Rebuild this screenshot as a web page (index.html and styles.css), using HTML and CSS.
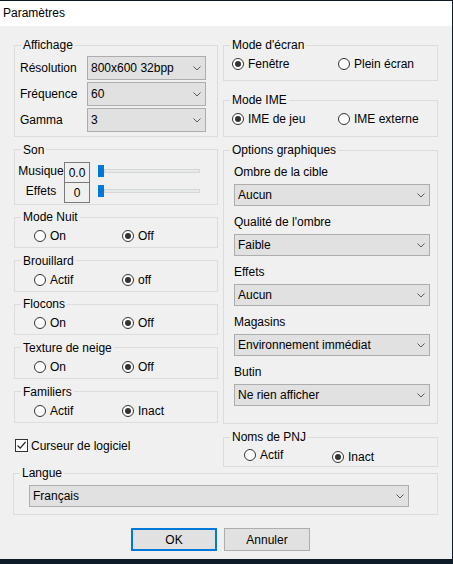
FILE: index.html
```html
<!DOCTYPE html>
<html lang="fr">
<head>
<meta charset="utf-8">
<title>Paramètres</title>
<link rel="stylesheet" href="styles.css">
</head>
<body>
<div class="window">
  <div class="titlebar">Paramètres</div>
  <div class="content">
    <div class="columns">
      <div class="col col-left">
        <fieldset class="group">
          <legend>Affichage</legend>
          <div class="display-grid">
            <span class="lbl">Résolution</span>
            <div class="combo h24"><span>800x600 32bpp</span><svg class="arrow" width="8" height="5" viewBox="0 0 8 5"><path d="M0.5 0.5 L4 4 L7.5 0.5" fill="none" stroke="#5a5a5a"/></svg></div>
            <span class="lbl">Fréquence</span>
            <div class="combo h24"><span>60</span><svg class="arrow" width="8" height="5" viewBox="0 0 8 5"><path d="M0.5 0.5 L4 4 L7.5 0.5" fill="none" stroke="#5a5a5a"/></svg></div>
            <span class="lbl">Gamma</span>
            <div class="combo h24"><span>3</span><svg class="arrow" width="8" height="5" viewBox="0 0 8 5"><path d="M0.5 0.5 L4 4 L7.5 0.5" fill="none" stroke="#5a5a5a"/></svg></div>
          </div>
        </fieldset>

        <fieldset class="group">
          <legend>Son</legend>
          <div class="sound">
            <div class="snd-row">
              <span class="snd-lbl">Musique</span>
              <span class="num">0.0</span>
              <div class="slider"><span class="thumb"></span><span class="track"></span></div>
            </div>
            <div class="snd-row">
              <span class="snd-lbl">Effets</span>
              <span class="num">0</span>
              <div class="slider"><span class="thumb"></span><span class="track"></span></div>
            </div>
          </div>
        </fieldset>

        <fieldset class="group">
          <legend>Mode Nuit</legend>
          <div class="radios">
            <label class="radio"><span class="rb"></span>On</label>
            <label class="radio"><span class="rb on"></span>Off</label>
          </div>
        </fieldset>

        <fieldset class="group">
          <legend>Brouillard</legend>
          <div class="radios">
            <label class="radio"><span class="rb"></span>Actif</label>
            <label class="radio"><span class="rb on"></span>off</label>
          </div>
        </fieldset>

        <fieldset class="group">
          <legend>Flocons</legend>
          <div class="radios">
            <label class="radio"><span class="rb"></span>On</label>
            <label class="radio"><span class="rb on"></span>Off</label>
          </div>
        </fieldset>

        <fieldset class="group">
          <legend>Texture de neige</legend>
          <div class="radios">
            <label class="radio"><span class="rb"></span>On</label>
            <label class="radio"><span class="rb on"></span>Off</label>
          </div>
        </fieldset>

        <fieldset class="group">
          <legend>Familiers</legend>
          <div class="radios">
            <label class="radio"><span class="rb"></span>Actif</label>
            <label class="radio"><span class="rb on"></span>Inact</label>
          </div>
        </fieldset>
      </div>

      <div class="col col-right">
        <fieldset class="group g-screen">
          <legend>Mode d'écran</legend>
          <div class="radios">
            <label class="radio"><span class="rb on"></span>Fenêtre</label>
            <label class="radio"><span class="rb"></span>Plein écran</label>
          </div>
        </fieldset>

        <fieldset class="group g-ime">
          <legend>Mode IME</legend>
          <div class="radios">
            <label class="radio"><span class="rb on"></span>IME de jeu</label>
            <label class="radio"><span class="rb"></span>IME externe</label>
          </div>
        </fieldset>

        <fieldset class="group g-opts">
          <legend>Options graphiques</legend>
          <div class="opts">
            <div class="opt">
              <span class="opt-lbl">Ombre de la cible</span>
              <div class="combo h22"><span>Aucun</span><svg class="arrow" width="8" height="5" viewBox="0 0 8 5"><path d="M0.5 0.5 L4 4 L7.5 0.5" fill="none" stroke="#5a5a5a"/></svg></div>
            </div>
            <div class="opt">
              <span class="opt-lbl">Qualité de l'ombre</span>
              <div class="combo h22"><span>Faible</span><svg class="arrow" width="8" height="5" viewBox="0 0 8 5"><path d="M0.5 0.5 L4 4 L7.5 0.5" fill="none" stroke="#5a5a5a"/></svg></div>
            </div>
            <div class="opt">
              <span class="opt-lbl">Effets</span>
              <div class="combo h22"><span>Aucun</span><svg class="arrow" width="8" height="5" viewBox="0 0 8 5"><path d="M0.5 0.5 L4 4 L7.5 0.5" fill="none" stroke="#5a5a5a"/></svg></div>
            </div>
            <div class="opt">
              <span class="opt-lbl">Magasins</span>
              <div class="combo h22"><span>Environnement immédiat</span><svg class="arrow" width="8" height="5" viewBox="0 0 8 5"><path d="M0.5 0.5 L4 4 L7.5 0.5" fill="none" stroke="#5a5a5a"/></svg></div>
            </div>
            <div class="opt">
              <span class="opt-lbl">Butin</span>
              <div class="combo h22"><span>Ne rien afficher</span><svg class="arrow" width="8" height="5" viewBox="0 0 8 5"><path d="M0.5 0.5 L4 4 L7.5 0.5" fill="none" stroke="#5a5a5a"/></svg></div>
            </div>
          </div>
        </fieldset>
      </div>
    </div>

    <div class="bottom-row">
      <label class="check"><span class="cb"><svg width="11" height="11" viewBox="0 0 11 11"><path d="M1.5 5.5 L4.2 8.2 L9.5 2" fill="none" stroke="#222" stroke-width="1.2"/></svg></span>Curseur de logiciel</label>
      <fieldset class="group g-pnj">
        <legend>Noms de PNJ</legend>
        <div class="radios">
          <label class="radio"><span class="rb"></span>Actif</label>
          <label class="radio low"><span class="rb on"></span>Inact</label>
        </div>
      </fieldset>
    </div>

    <fieldset class="group g-lang">
      <legend>Langue</legend>
      <div class="lang-body">
        <div class="combo lang"><span>Français</span><svg class="arrow" width="8" height="5" viewBox="0 0 8 5"><path d="M0.5 0.5 L4 4 L7.5 0.5" fill="none" stroke="#5a5a5a"/></svg></div>
      </div>
    </fieldset>

    <div class="buttons">
      <div class="btn default">OK</div>
      <div class="btn">Annuler</div>
    </div>
  </div>
</div>
</body>
</html>
```

FILE: styles.css
```css
* { box-sizing: border-box; }

html, body {
  margin: 0;
  padding: 0;
}

body {
  background: #0e1b29;
  padding-top: 1px;
  height: 564px;
  overflow: hidden;
  font-family: "Liberation Sans", Arial, sans-serif;
  font-size: 12px;
  color: #000;
}

.window {
  width: 452px;
  height: 558px;
  background: #f0f0f0;
}

.titlebar {
  height: 25px;
  line-height: 25px;
  background: #fff;
  padding-left: 3px;
  font-size: 12px;
}

.content {
  padding: 12px 0 0 14px;
}

.columns,
.bottom-row {
  display: grid;
  grid-template-columns: 204px 215px;
  column-gap: 5px;
  align-items: start;
}

.col {
  display: flex;
  flex-direction: column;
}

.col-left { gap: 5.6px; }

.group {
  margin: 0;
  padding: 0;
  min-width: 0;
  border: 1px solid #dcdcdc;
}

.group legend {
  margin-left: 6px;
  padding: 0 2px;
  height: 14px;
  line-height: 14px;
  font-size: 12px;
}

/* Affichage */
.display-grid {
  display: grid;
  grid-template-columns: 67px 119px;
  row-gap: 2px;
  align-items: center;
  padding: 4px 11px 4px 5px;
}

.combo {
  display: flex;
  align-items: center;
  justify-content: space-between;
  background: #e1e1e1;
  border: 1px solid #adadad;
  padding: 0 4px 0 3px;
  white-space: nowrap;
}

.combo.h24 { height: 24px; }
.combo.h22 { height: 22px; }

.arrow { flex: none; display: block; }

/* Son */
.sound {
  padding: 5px 0 1px 3px;
}

.snd-row {
  display: flex;
  align-items: center;
}

.snd-row + .snd-row { margin-top: -1px; }

.snd-lbl {
  width: 46px;
  text-align: center;
  margin-top: -3px;
}

.num {
  width: 26px;
  height: 21px;
  border: 1px solid #7a7a7a;
  display: flex;
  align-items: center;
  justify-content: center;
  padding-top: 1px;
  margin-right: 8px;
}

.slider {
  width: 102px;
  height: 12px;
  display: flex;
  align-items: center;
  margin-top: -3px;
}

.thumb {
  flex: none;
  width: 6px;
  height: 12px;
  background: #0078d7;
}

.track {
  flex: 1;
  height: 4px;
  background: #e7eaea;
  border: 1px solid #d6d6d6;
}

/* Radios */
.radios {
  display: grid;
  grid-template-columns: 88px auto;
  padding: 5px 0 4px 19px;
}

.g-screen .radios {
  grid-template-columns: 106px auto;
  padding: 5px 0 9px 8px;
}

.g-ime { margin-top: 12px; }

.g-ime .radios {
  grid-template-columns: 106px auto;
  padding: 5px 0 10px 8px;
}

.g-opts { margin-top: 6px; }

.g-pnj .radios {
  align-items: start;
  padding: 4px 0 2px 20px;
}

.radio {
  display: flex;
  align-items: center;
  height: 14px;
  white-space: nowrap;
}

.radio.low { margin-top: 2px; }

.rb {
  flex: none;
  width: 12px;
  height: 12px;
  border: 1px solid #333;
  border-radius: 50%;
  background: #fff;
  margin-right: 4px;
  display: grid;
  place-items: center;
}

.rb.on::after {
  content: "";
  width: 6px;
  height: 6px;
  border-radius: 50%;
  background: #333;
}

/* Options graphiques */
.opts {
  display: flex;
  flex-direction: column;
  gap: 8px;
  padding: 7px 7px 17px 10px;
}

.opt-lbl {
  display: block;
  height: 16px;
  line-height: 16px;
  margin-bottom: 4px;
}

/* Bottom */
.bottom-row { margin-top: 6px; }

.check {
  display: flex;
  align-items: center;
  height: 13px;
  margin: 9px 0 0 1px;
}

.cb {
  flex: none;
  width: 13px;
  height: 13px;
  border: 1px solid #333;
  background: #fff;
  margin-right: 3px;
  display: grid;
  place-items: center;
}

.cb svg { display: block; }

.g-lang {
  width: 425px;
  margin: -1px 0 0 -1px;
}

.lang-body {
  padding: 5px 0 7px 15px;
}

.combo.lang {
  width: 380px;
  height: 22px;
}

.buttons {
  display: flex;
  gap: 7px;
  padding-left: 117px;
  margin-top: 13px;
}

.btn {
  width: 86px;
  height: 23px;
  display: flex;
  align-items: center;
  justify-content: center;
  background: #e1e1e1;
  border: 1px solid #adadad;
}

.btn.default {
  border: 2px solid #0078d7;
}
```
